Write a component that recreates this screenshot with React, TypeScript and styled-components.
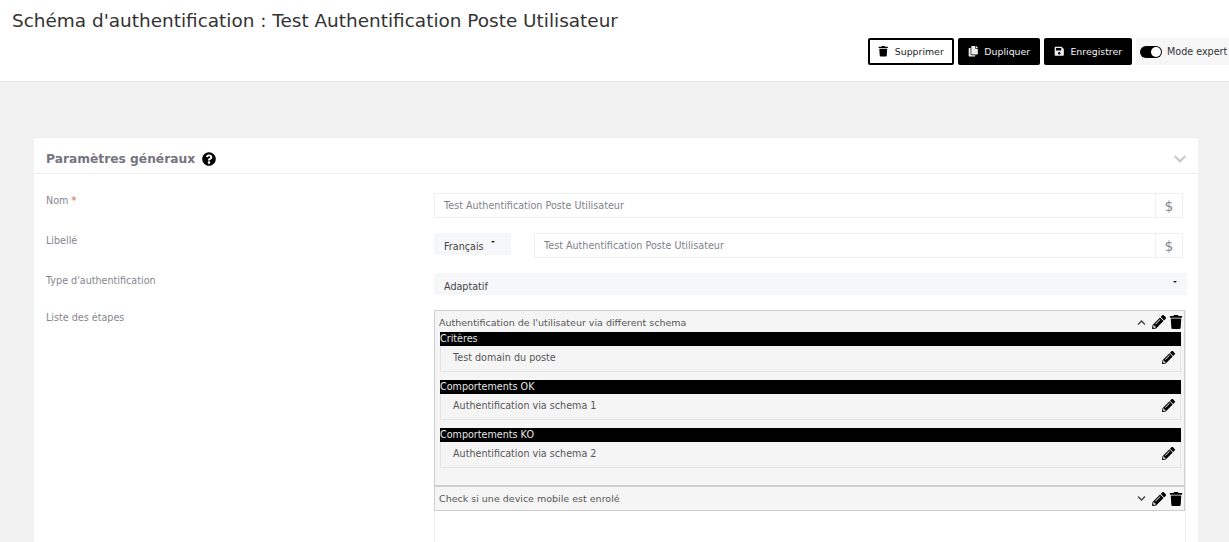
import styled, { createGlobalStyle } from "styled-components";
import {
  FaChevronDown,
  FaChevronUp,
  FaCopy,
  FaPencilAlt,
  FaQuestionCircle,
  FaSave,
  FaTrash,
} from "react-icons/fa";

const GlobalStyle = createGlobalStyle`
  html, body {
    margin: 0;
    height: 542px;
    overflow: hidden;
    background: #f2f2f3;
    font-family: "DejaVu Sans", Verdana, sans-serif;
  }
  * { box-sizing: border-box; }
`;

const Header = styled.header`
  height: 82px;
  background: #fff;
  border-bottom: 1px solid #e9e9e9;
  padding: 10px 0 0 12px;
`;

const Title = styled.h1`
  margin: 0;
  font-size: 18.45px;
  line-height: 21px;
  font-weight: 400;
  color: #333;
`;

const Toolbar = styled.div`
  display: flex;
  justify-content: flex-end;
  gap: 4px;
  margin-top: 7px;
`;

const ActionButton = styled.button<{ $outline?: boolean; $width: number }>`
  width: ${(p) => p.$width}px;
  height: 27px;
  display: flex;
  align-items: center;
  justify-content: center;
  gap: 6px;
  padding: 0;
  border-radius: 2px;
  border: 2px solid #000;
  background: ${(p) => (p.$outline ? "#fff" : "#000")};
  color: ${(p) => (p.$outline ? "#222" : "#f2f2f2")};
  font: 400 9.4px "DejaVu Sans", sans-serif;
  svg { font-size: 10.5px; color: ${(p) => (p.$outline ? "#000" : "#eee")}; }
`;

const ExpertToggle = styled.div`
  width: 93px;
  height: 27px;
  display: flex;
  align-items: center;
  gap: 5px;
  padding-left: 4px;
  background: #f6f6f6;
  color: #333;
  font-size: 9.6px;
  white-space: nowrap;
`;

const SwitchTrack = styled.span`
  width: 22px;
  height: 12px;
  border-radius: 6px;
  background: #000;
  display: flex;
  justify-content: flex-end;
  padding: 1px;
`;

const SwitchKnob = styled.span`
  width: 10px;
  height: 10px;
  border-radius: 50%;
  background: #fff;
`;

const Main = styled.main`
  padding: 55px 31px 0 34px;
`;

const Card = styled.section`
  background: #fff;
  border-top: 1px solid #e8ebef;
  height: 420px;
  overflow: hidden;
`;

const CardHeader = styled.div`
  height: 36px;
  display: flex;
  align-items: center;
  padding: 6px 11px 0 12px;
  border-bottom: 1px solid #eee;
`;

const CardTitle = styled.h2`
  margin: 0;
  font-size: 12.25px;
  font-weight: 700;
  color: #74757f;
`;

const HelpIcon = styled(FaQuestionCircle)`
  margin-left: 7px;
  font-size: 14px;
  color: #000;
`;

const Collapse = styled(FaChevronDown)`
  margin-left: auto;
  font-size: 14px;
  color: #c9c9c9;
`;

const Form = styled.div`
  padding-top: 19px;
`;

const Row = styled.div<{ $height: number }>`
  display: grid;
  grid-template-columns: 388px 1fr;
  height: ${(p) => p.$height}px;
  padding-left: 12px;
`;

const Label = styled.label`
  padding-top: 1px;
  font-size: 9.6px;
  line-height: 14px;
  color: #85868d;
`;

const Required = styled.span`
  color: #e4574f;
`;

const Fields = styled.div`
  display: flex;
  align-items: flex-start;
`;

const InputGroup = styled.div`
  flex: 1;
  height: 25px;
  margin-right: 15px;
  display: flex;
  border: 1px solid #eeeeee;
  background: #fff;
`;

const InputText = styled.div`
  flex: 1;
  padding-left: 9px;
  font-size: 9.6px;
  line-height: 23px;
  color: #80828a;
`;

const Addon = styled.div`
  width: 27px;
  border-left: 1px solid #eee;
  text-align: center;
  font-size: 14px;
  line-height: 25px;
  color: #85888f;
`;

const Select = styled.div<{ $width?: number; $gap?: number }>`
  ${(p) => (p.$width ? `width: ${p.$width}px;` : "flex: 1; margin-right: 11px;")}
  ${(p) => (p.$gap ? `margin-right: ${p.$gap}px;` : "")}
  height: 22px;
  display: flex;
  align-items: center;
  padding: 4px 10px 0;
  background: #f6f7f9;
  color: #444;
  font-size: 9.6px;
`;

const Caret = styled.span<{ $right?: boolean }>`
  width: 0;
  height: 0;
  margin: 0 0 9px ${(p) => (p.$right ? "auto" : "7px")};
  border: 2.5px solid transparent;
  border-top-color: #222;
  border-bottom: 0;
`;

const StepList = styled.div`
  margin-right: 12px;
  height: 240px;
  flex: 1;
  border-left: 1px solid #eee;
  border-right: 1px solid #eee;
`;

const Step = styled.div`
  background: #f5f5f5;
  border: 1px solid #cfcfcf;
  margin: 0 0 0 -1px;
`;

const StepHeader = styled.div`
  height: 21px;
  display: flex;
  align-items: center;
  padding: 1px 1px 0 4px;
  font-size: 9.5px;
  color: #555;
`;

const StepHeaderLast = styled(StepHeader)`
  height: 23px;
  padding-top: 0;
`;

const StepIcons = styled.div`
  margin-left: auto;
  display: flex;
  align-items: center;
  gap: 3px;
  svg { color: #000; font-size: 14px; }
`;

const Toggle = styled.span`
  display: flex;
  margin-right: 3px;
  svg { font-size: 9px; color: #444; }
`;

const StepBody = styled.div`
  padding: 0 3px 17px 5px;
`;

const Block = styled.div`
  margin-bottom: 8px;
  &:last-child { margin-bottom: 0; }
`;

const BlockTitle = styled.div`
  height: 14px;
  background: #000;
  color: #e6e6e6;
  font-size: 9.6px;
  line-height: 14px;
`;

const BlockItem = styled.div`
  height: 26px;
  display: flex;
  align-items: center;
  justify-content: space-between;
  padding: 0 5px 2px 12px;
  background: #f5f5f5;
  border: 1px solid #e3e3e3;
  border-top: 0;
  font-size: 9.6px;
  color: #555;
  svg { color: #000; font-size: 13px; }
`;

const blocks = [
  { title: "Critères", item: "Test domain du poste" },
  { title: "Comportements OK", item: "Authentification via schema 1" },
  { title: "Comportements KO", item: "Authentification via schema 2" },
];

function App() {
  return (
    <>
      <GlobalStyle />
      <Header>
        <Title>Schéma d'authentification : Test Authentification Poste Utilisateur</Title>
        <Toolbar>
          <ActionButton $outline $width={86}>
            <FaTrash />
            Supprimer
          </ActionButton>
          <ActionButton $width={82}>
            <FaCopy />
            Dupliquer
          </ActionButton>
          <ActionButton $width={88}>
            <FaSave />
            Enregistrer
          </ActionButton>
          <ExpertToggle>
            <SwitchTrack>
              <SwitchKnob />
            </SwitchTrack>
            Mode expert
          </ExpertToggle>
        </Toolbar>
      </Header>
      <Main>
        <Card>
          <CardHeader>
            <CardTitle>Paramètres généraux</CardTitle>
            <HelpIcon />
            <Collapse />
          </CardHeader>
          <Form>
            <Row $height={40}>
              <Label>
                Nom <Required>*</Required>
              </Label>
              <Fields>
                <InputGroup>
                  <InputText>Test Authentification Poste Utilisateur</InputText>
                  <Addon>$</Addon>
                </InputGroup>
              </Fields>
            </Row>
            <Row $height={40}>
              <Label>Libellé</Label>
              <Fields>
                <Select $width={77} $gap={23}>
                  Français
                  <Caret />
                </Select>
                <InputGroup>
                  <InputText>Test Authentification Poste Utilisateur</InputText>
                  <Addon>$</Addon>
                </InputGroup>
              </Fields>
            </Row>
            <Row $height={37}>
              <Label>Type d'authentification</Label>
              <Fields>
                <Select>
                  Adaptatif
                  <Caret $right />
                </Select>
              </Fields>
            </Row>
            <Row $height={240}>
              <Label>Liste des étapes</Label>
              <Fields>
                <StepList>
                  <Step>
                    <StepHeader>
                      Authentification de l'utilisateur via different schema
                      <StepIcons>
                        <Toggle>
                          <FaChevronUp />
                        </Toggle>
                        <FaPencilAlt />
                        <FaTrash />
                      </StepIcons>
                    </StepHeader>
                    <StepBody>
                      {blocks.map((block) => (
                        <Block key={block.title}>
                          <BlockTitle>{block.title}</BlockTitle>
                          <BlockItem>
                            {block.item}
                            <FaPencilAlt />
                          </BlockItem>
                        </Block>
                      ))}
                    </StepBody>
                  </Step>
                  <Step>
                    <StepHeaderLast>
                      Check si une device mobile est enrolé
                      <StepIcons>
                        <Toggle>
                          <FaChevronDown />
                        </Toggle>
                        <FaPencilAlt />
                        <FaTrash />
                      </StepIcons>
                    </StepHeaderLast>
                  </Step>
                </StepList>
              </Fields>
            </Row>
          </Form>
        </Card>
      </Main>
    </>
  );
}

export default App;
